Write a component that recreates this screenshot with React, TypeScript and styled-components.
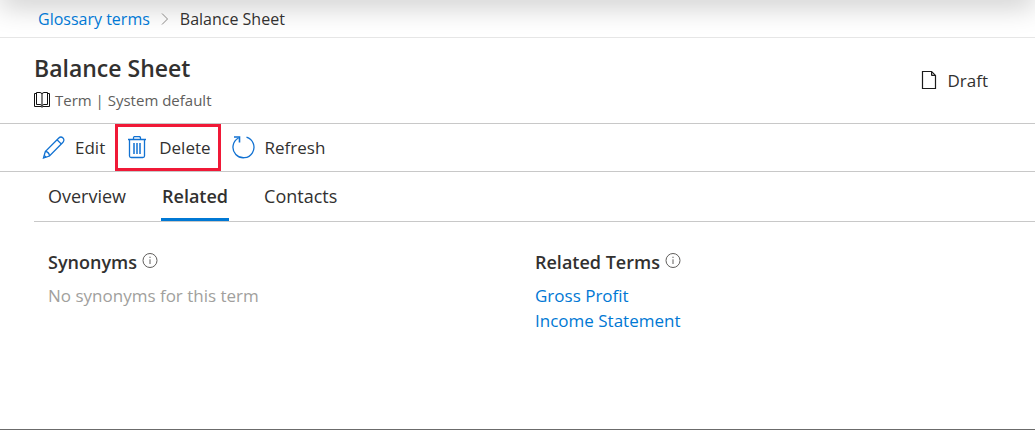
import React from "react";
import styled, { createGlobalStyle } from "styled-components";

const GlobalStyle = createGlobalStyle`
  *, *::before, *::after { box-sizing: border-box; }
  html, body { margin: 0; background: #fff; }
  body {
    font-family: "Open Sans", "Noto Sans", sans-serif;
    font-size: 17px;
    line-height: 24px;
    color: #323130;
  }
  h1, h2, p, ul { margin: 0; padding: 0; }
  svg { display: block; flex: none; }
`;

const Page = styled.div`
  display: flex;
  flex-direction: column;
  min-height: 100vh;
  border-bottom: 1px solid #6b6b6b;
  overflow: hidden;
`;

const Breadcrumb = styled.nav`
  position: relative;
  display: flex;
  align-items: center;
  gap: 9px;
  height: 38px;
  padding: 0 38px;
  border-bottom: 1px solid #e6e6e6;
  font-size: 16px;

  &::before {
    content: "";
    position: absolute;
    top: -24px;
    left: 0;
    right: 0;
    height: 24px;
    box-shadow: 0 6px 28px rgba(0, 0, 0, 0.22);
  }
  > * { position: relative; }
`;

const TextLink = styled.a`
  color: #0078d4;
  text-decoration: none;
  &:hover { text-decoration: underline; }
`;

const Header = styled.header`
  display: flex;
  justify-content: space-between;
  align-items: flex-start;
  height: 86px;
  padding: 15px 47px 0 34px;
  border-bottom: 1px solid #c8c8c8;
`;

const Title = styled.h1`
  font-size: 23px;
  line-height: 30px;
  font-weight: 600;
`;

const Subtitle = styled.p`
  display: flex;
  align-items: center;
  gap: 5px;
  margin-top: 5px;
  font-size: 15px;
  color: #605e5c;
`;

const Status = styled.div`
  display: flex;
  align-items: center;
  gap: 10px;
  margin-top: 16px;
`;

const Toolbar = styled.div`
  display: flex;
  height: 48px;
  padding-left: 31px;
  border-bottom: 1px solid #c8c8c8;
`;

const ToolButton = styled.button<{ $marked?: boolean }>`
  display: flex;
  align-items: center;
  gap: 9px;
  height: 47px;
  padding: 0 7px 0 8px;
  border: 3px solid ${(p) => (p.$marked ? "#f01937" : "transparent")};
  background: none;
  color: inherit;
  font: inherit;
  cursor: pointer;
`;

const Tabs = styled.div`
  display: flex;
  gap: 34px;
  height: 50px;
  margin-left: 34px;
  padding-left: 13px;
  border-bottom: 1px solid #c8c8c8;
`;

const Tab = styled.button<{ $active?: boolean }>`
  height: 49px;
  padding: 1px 1px 0;
  border: 0;
  border-bottom: 3px solid ${(p) => (p.$active ? "#0078d4" : "transparent")};
  background: none;
  color: inherit;
  font: inherit;
  font-size: 18px;
  font-weight: ${(p) => (p.$active ? 600 : 400)};
  cursor: pointer;
`;

const Content = styled.main`
  display: grid;
  grid-template-columns: 1fr 1fr;
  padding: 28px 13px 0 48px;
`;

const SectionTitle = styled.h2`
  display: flex;
  align-items: center;
  gap: 5px;
  margin-bottom: 9px;
  font-size: 18px;
  font-weight: 600;
`;

const Empty = styled.p`
  line-height: 25px;
  color: #a19f9d;
`;

const TermList = styled.ul`
  list-style: none;
  line-height: 25px;
`;

const Chevron = () => (
  <svg width="12" height="16" viewBox="0 0 12 16" fill="none" stroke="#8a8886" aria-hidden="true">
    <path d="M3 2.5 8.5 8 3 13.5" />
  </svg>
);

const BookIcon = () => (
  <svg width="16" height="17" viewBox="0 0 16 17" fill="none" stroke="#111" aria-hidden="true">
    <path d="M2.500 1.500h-2v13h6.500q1 1.500 2 0h6.500v-13h-2" />
    <path d="M2.500 12.500V.5H6Q8 .5 8 2.500 8 .5 10 .5h3.500v12H10q-2 0-2 2 0-2-2-2z" />
    <path d="M8 2.500v12" strokeWidth="1.500" stroke="#555" />
  </svg>
);

const PageIcon = () => (
  <svg width="16" height="20" viewBox="0 0 16 20" fill="none" stroke="#1b1b1b" aria-hidden="true">
    <path d="M1.500 .5h9l4 4v13h-13z" strokeWidth="1.200" />
    <path d="M10.500 .5v4h4z" fill="#999" />
  </svg>
);

const EditIcon = () => (
  <svg width="24" height="24" viewBox="0 0 24 24" fill="none" stroke="#1272d2" strokeWidth="1.300" aria-hidden="true">
    <path d="M1.500 22 3.300 15.500 16.800 2c1.200-1.200 3-1.200 4.200 0s1.200 3 0 4.200L7.500 20 1.500 22Z" />
    <path d="m15 3.700 4.200 4.200M3.300 15.500c2.200.2 4 2 4.200 4.500M2.200 19.500l2 1.800" />
  </svg>
);

const DeleteIcon = () => (
  <svg width="24" height="24" viewBox="0 0 24 24" fill="none" stroke="#1272d2" strokeWidth="1.300" aria-hidden="true">
    <path d="M2 3.500h18M7.500 3.500V2c0-1 .5-1.500 1.500-1.500h4c1 0 1.500.5 1.500 1.500v1.500M3.500 3.500v16.500c0 1 .7 1.500 1.700 1.500h11.600c1 0 1.700-.5 1.700-1.500V3.500" />
    <path d="M8 7v11M11 7v11M14 7v11" strokeWidth="1.500" />
  </svg>
);

const RefreshIcon = () => (
  <svg width="24" height="24" viewBox="0 0 24 24" fill="none" stroke="#1272d2" strokeWidth="1.300" aria-hidden="true">
    <path d="M14.500 1.200A10.500 10.500 0 1 1 6.500 2" />
    <path d="M2 1H7.500v5.500" strokeWidth="1.600" />
  </svg>
);

const InfoIcon = () => (
  <svg width="16" height="20" viewBox="0 0 16 20" fill="none" stroke="#605e5c" role="img" aria-label="Info">
    <circle cx="8" cy="8.500" r="7" />
    <path d="M8 7.300v4.700M8 4.700v1.300" />
  </svg>
);

export default function App() {
  return (
    <>
      <GlobalStyle />
      <Page>
        <Breadcrumb aria-label="Breadcrumb">
          <TextLink href="#glossary">Glossary terms</TextLink>
          <Chevron />
          <span>Balance Sheet</span>
        </Breadcrumb>
        <Header>
          <div>
            <Title>Balance Sheet</Title>
            <Subtitle>
              <BookIcon />
              Term | System default
            </Subtitle>
          </div>
          <Status>
            <PageIcon />
            Draft
          </Status>
        </Header>
        <Toolbar role="toolbar">
          <ToolButton><EditIcon />Edit</ToolButton>
          <ToolButton $marked><DeleteIcon />Delete</ToolButton>
          <ToolButton><RefreshIcon />Refresh</ToolButton>
        </Toolbar>
        <Tabs role="tablist">
          <Tab role="tab" aria-selected={false}>Overview</Tab>
          <Tab role="tab" aria-selected $active>Related</Tab>
          <Tab role="tab" aria-selected={false}>Contacts</Tab>
        </Tabs>
        <Content>
          <section>
            <SectionTitle>Synonyms <InfoIcon /></SectionTitle>
            <Empty>No synonyms for this term</Empty>
          </section>
          <section>
            <SectionTitle>Related Terms <InfoIcon /></SectionTitle>
            <TermList>
              <li><TextLink href="#gross-profit">Gross Profit</TextLink></li>
              <li><TextLink href="#income-statement">Income Statement</TextLink></li>
            </TermList>
          </section>
        </Content>
      </Page>
    </>
  );
}
